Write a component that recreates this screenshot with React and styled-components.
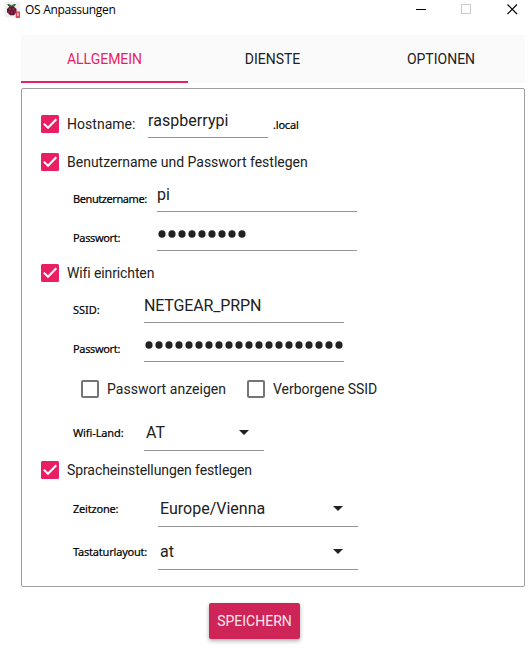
import React from "react";
import styled, { createGlobalStyle } from "styled-components";

const GlobalStyle = createGlobalStyle`
  * { box-sizing: border-box; }
  body { margin: 0; background: #fff; overflow: hidden; }
`;

const Window = styled.div`
  width: 530px;
  height: 651px;
  background: #fff;
  color: #212121;
  font-family: Roboto, "Liberation Sans", sans-serif;
  display: flex;
  flex-direction: column;
`;

const TitleBar = styled.header`
  height: 35px;
  padding: 0 12px 0 4px;
  display: flex;
  align-items: flex-start;
`;

const AppIcon = styled.svg`
  width: 17px;
  height: 16px;
  margin-top: 2px;
`;

const Title = styled.span`
  flex: 1;
  margin-left: 4px;
  font: 12px/20px "Open Sans", sans-serif;
  letter-spacing: -0.3px;
  color: #000;
`;

const WindowControls = styled.div`
  display: flex;
  gap: 35px;
  padding-top: 4px;
`;

const ControlIcon = styled.svg`
  width: 11px;
  height: 11px;
  fill: none;
  stroke: ${(p) => p.$color || "#000"};
`;

const Tabs = styled.nav`
  width: 504px;
  height: 48px;
  margin-left: 21px;
  display: grid;
  grid-template-columns: 167px 169px 168px;
  background: #fafafa;
`;

const Tab = styled.button`
  border: 0;
  padding: 2px 0 0;
  background: transparent;
  border-bottom: 2px solid ${(p) => (p.$active ? "#e91e63" : "transparent")};
  color: ${(p) => (p.$active ? "#e91e63" : "#212121")};
  font: 14px/20px Roboto, sans-serif;
`;

const Panel = styled.main`
  width: 504px;
  height: 499px;
  margin: 5px 0 0 21px;
  padding: 17px 0 0 19px;
  border: 1px solid #9e9e9e;
  border-radius: 2px;
`;

const CheckRow = styled.div`
  display: flex;
  align-items: center;
  height: 36px;
  margin-top: ${(p) => p.$gap}px;
  padding-left: ${(p) => p.$indent || 0}px;
`;

const CheckLabel = styled.label`
  display: flex;
  align-items: center;
  gap: 8px;
  height: 36px;
  width: ${(p) => (p.$width ? `${p.$width}px` : "auto")};
  font-size: 14px;
  line-height: 20px;
  letter-spacing: ${(p) => p.$spacing ?? 0}px;
  white-space: nowrap;
`;

const Box = styled.svg`
  width: 18px;
  height: 18px;
  flex: none;
`;

const FieldRow = styled.div`
  display: flex;
  height: 32px;
  margin-top: ${(p) => p.$gap || 0}px;
  padding-left: ${(p) => p.$indent ?? 32}px;
`;

const FieldLabel = styled.label`
  width: ${(p) => p.$width}px;
  height: 32px;
  padding-top: ${(p) => (p.$select ? 0 : 3)}px;
  font-family: "Noto Sans", sans-serif;
  font-size: 11px;
  line-height: ${(p) => (p.$select ? 28 : 32)}px;
  letter-spacing: ${(p) => p.$spacing ?? -0.2}px;
  -webkit-text-stroke: 0.2px #000;
  white-space: nowrap;
  color: #000;
`;

const Suffix = styled(FieldLabel).attrs({ as: "span" })`
  padding-left: 5px;
`;

const Input = styled.div`
  width: ${(p) => p.$width}px;
  height: 32px;
  border-bottom: 1px solid #949494;
  font-size: 16px;
  line-height: 30px;
  letter-spacing: ${(p) => p.$spacing ?? 0.05}px;
  white-space: nowrap;
`;

const Secret = styled(Input)`
  display: flex;
  align-items: center;
  gap: 2px;
  padding: 0 0 1px 1px;
`;

const Dot = styled.svg`
  flex: none;
  width: 8px;
  height: 8px;
  fill: #212121;
`;

const Select = styled(Input)`
  display: flex;
  justify-content: space-between;
  padding: 0 15px 0 2px;
  line-height: 28px;
`;

const Arrow = styled.svg`
  width: 10px;
  height: 5px;
  margin-top: 11px;
  fill: #212121;
`;

const SaveButton = styled.button`
  width: 91px;
  height: 36px;
  margin: 16px 0 0 209px;
  padding: 0;
  border: 0;
  border-radius: 2px;
  background: #cf2457;
  color: #fbe9ee;
  font: 14px/20px Roboto, sans-serif;
  box-shadow: 0 2px 4px rgba(0, 0, 0, 0.32);
`;

function Check({ checked, children, ...rest }) {
  return (
    <CheckLabel {...rest}>
      <Box viewBox="0 0 18 18">
        {checked ? (
          <>
            <rect width="18" height="18" rx="1.5" fill="#e91e63" />
            <path d="M2.8 8.6 7 12.8 15.3 4.3" fill="none" stroke="#fff" strokeWidth="2" />
          </>
        ) : (
          <rect x="1" y="1" width="16" height="16" rx="1" fill="none" stroke="#757575" strokeWidth="2" />
        )}
      </Box>
      <span>{children}</span>
    </CheckLabel>
  );
}

function Password({ length, width }) {
  return (
    <Secret $width={width}>
      {Array.from({ length }, (_, i) => (
        <Dot key={i} viewBox="0 0 8 8">
          <ellipse cx="4" cy="4" rx="3.6" ry="3.8" />
        </Dot>
      ))}
    </Secret>
  );
}

function Dropdown({ value, width, spacing }) {
  return (
    <Select $width={width} $spacing={spacing}>
      <span>{value}</span>
      <Arrow viewBox="0 0 10 5">
        <path d="M0 0h10L5 5z" />
      </Arrow>
    </Select>
  );
}

export default function App() {
  return (
    <Window>
      <GlobalStyle />
      <TitleBar>
        <AppIcon viewBox="0 0 17 16">
          <rect x="0.5" width="15.5" height="15.5" rx="2" fill="#f0f0f0" />
          <path d="M3.2 2q3-.5 4.3 1.5Q9 1.500 12 2q-.4 2.500-3 3H6.200Q3.500 4.500 3.200 2z" fill="#386b3d" />
          <path d="M5.500 4.500h4.300L12.500 7v3.200L10 13.300H6.200L3 10.200V7z" fill="#59182f" />
          <path d="M5 6.200h2v2H5zM8.600 6.200h2v2h-2zM6.800 9.500h2v2h-2zM4 9h1.600v1.600H4zM10 9h1.600v1.600H10z" fill="#a52c50" />
          <rect x="11.700" y="9.500" width="4.300" height="6.500" rx=".5" fill="#d94c60" />
          <path d="M13.200 11h1.400v3h-1.400z" fill="#f5c6cd" />
        </AppIcon>
        <Title>OS Anpassungen</Title>
        <WindowControls>
          <ControlIcon viewBox="0 0 11 11">
            <path d="M1 5.500h10" />
          </ControlIcon>
          <ControlIcon viewBox="0 0 11 11" $color="#ccc">
            <rect x=".5" y=".5" width="9" height="9" />
          </ControlIcon>
          <ControlIcon viewBox="0 0 11 11">
            <path d="m.5.5 9.500 9.500M10 .5.5 10" strokeWidth="1.200" />
          </ControlIcon>
        </WindowControls>
      </TitleBar>

      <Tabs>
        <Tab $active>ALLGEMEIN</Tab>
        <Tab>DIENSTE</Tab>
        <Tab>OPTIONEN</Tab>
      </Tabs>

      <Panel>
        <FieldRow $indent={0}>
          <Check checked $width={107} $spacing={0.03}>Hostname:</Check>
          <Input $width={120}>raspberrypi</Input>
          <Suffix>.local</Suffix>
        </FieldRow>

        <CheckRow $gap={6}>
          <Check checked>Benutzername und Passwort festlegen</Check>
        </CheckRow>
        <FieldRow>
          <FieldLabel $width={84} $spacing={-0.42}>Benutzername:</FieldLabel>
          <Input $width={200}>pi</Input>
        </FieldRow>
        <FieldRow $gap={7}>
          <FieldLabel $width={84} $spacing={-0.35}>Passwort:</FieldLabel>
          <Password length={9} width={200} />
        </FieldRow>

        <CheckRow $gap={4}>
          <Check checked $spacing={-0.12}>Wifi einrichten</Check>
        </CheckRow>
        <FieldRow>
          <FieldLabel $width={71} $spacing={0}>SSID:</FieldLabel>
          <Input $width={200} $spacing={-0.15}>NETGEAR_PRPN</Input>
        </FieldRow>
        <FieldRow $gap={7}>
          <FieldLabel $width={71} $spacing={-0.35}>Passwort:</FieldLabel>
          <Password length={20} width={200} />
        </FieldRow>
        <CheckRow $gap={9} $indent={40}>
          <Check $width={166} $spacing={0.03}>Passwort anzeigen</Check>
          <Check $spacing={-0.04}>Verborgene SSID</Check>
        </CheckRow>
        <FieldRow $gap={12}>
          <FieldLabel $width={71} $select $spacing={-0.12}>Wifi-Land:</FieldLabel>
          <Dropdown value="AT" width={120} />
        </FieldRow>

        <CheckRow $gap={1}>
          <Check checked $spacing={-0.09}>Spracheinstellungen festlegen</Check>
        </CheckRow>
        <FieldRow $gap={7}>
          <FieldLabel $width={85} $select>Zeitzone:</FieldLabel>
          <Dropdown value="Europe/Vienna" width={200} spacing={0} />
        </FieldRow>
        <FieldRow $gap={11}>
          <FieldLabel $width={85} $select>Tastaturlayout:</FieldLabel>
          <Dropdown value="at" width={200} />
        </FieldRow>
      </Panel>

      <SaveButton>SPEICHERN</SaveButton>
    </Window>
  );
}
